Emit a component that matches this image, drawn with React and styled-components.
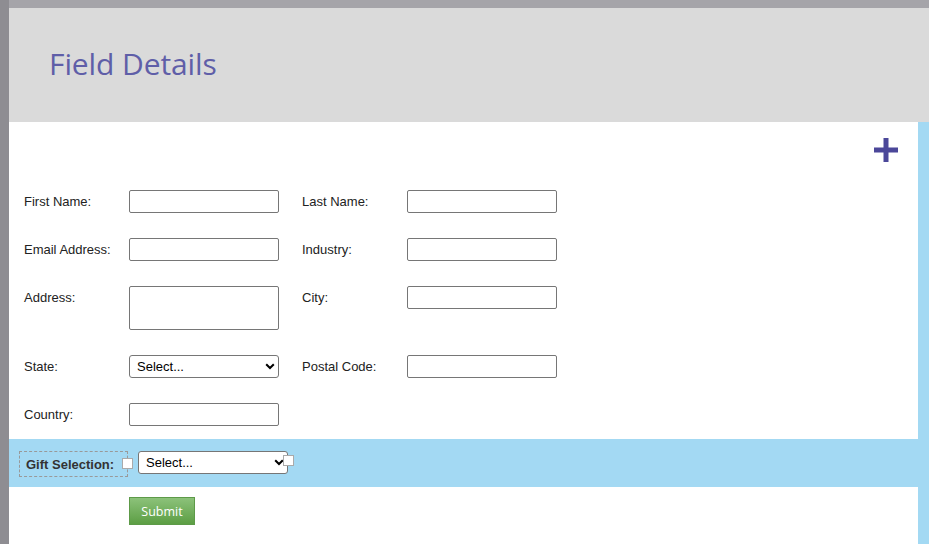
import React from "react"
import styled, { createGlobalStyle } from "styled-components"

const Global = createGlobalStyle`
  html, body { margin: 0; padding: 0; }
  body { background: #fff; font-family: "Liberation Sans", Arial, sans-serif; }
`

const Page = styled.div`
  width: 929px;
  height: 544px;
  display: flex;
  background: #8e8d92;
  overflow: hidden;
`

const Main = styled.div`
  margin-left: 9px;
  flex: 1;
  display: flex;
  flex-direction: column;
  border-top: 8px solid #a5a4a9;
`

const Header = styled.header`
  height: 114px;
  background: #dadada;
  display: flex;
  align-items: center;
  padding-left: 40px;
`

const Title = styled.h1`
  margin: 0 0 3px;
  font-family: "Open Sans", sans-serif;
  font-weight: 400;
  font-size: 30px;
  color: #5f5ea8;
  letter-spacing: -0.1px;
`

const Body = styled.div`
  flex: 1;
  background: #fff;
  border-right: 11px solid #a3d9f3;
  display: flex;
  flex-direction: column;
`

const Toolbar = styled.div`
  height: 68px;
  display: flex;
  justify-content: flex-end;
  align-items: flex-start;
  padding: 16px 20px 0 0;
  box-sizing: border-box;
`

const AddButton = styled.button`
  border: 0;
  background: none;
  padding: 0;
  width: 24px;
  height: 24px;
  cursor: pointer;
  display: block;
`

const Form = styled.div`
  display: grid;
  grid-template-columns: 105px 150px 23px 105px 150px;
  row-gap: 25px;
  padding-left: 15px;
`

const Label = styled.label`
  box-sizing: border-box;
  height: 23px;
  font-size: 13px;
  line-height: 22px;
  padding-top: 1px;
  color: #222;
  grid-column: ${p => p.col};
`

const TextInput = styled.input`
  box-sizing: border-box;
  width: 150px;
  height: 23px;
  border: 1px solid #767676;
  border-radius: 2px;
  background: #fff;
  margin: 0;
  grid-column: ${p => p.col};
`

const TextArea = styled.textarea`
  box-sizing: border-box;
  display: block;
  width: 150px;
  height: 44px;
  border: 1px solid #767676;
  border-radius: 2px;
  margin: 0;
  resize: none;
  grid-column: ${p => p.col};
`

const SelectWrap = styled.div`
  position: relative;
  width: 150px;
  height: 23px;
  grid-column: ${p => p.col};
`

const SelectBox = styled.select`
  appearance: none;
  box-sizing: border-box;
  display: block;
  width: 100%;
  height: 100%;
  margin: 0;
  padding: 0 20px 0 7px;
  border: 1px solid #767676;
  border-radius: 3px;
  background: #fff;
  font-family: "Liberation Sans", Arial, sans-serif;
  font-size: 13px;
  color: #000;
`

const Chevron = styled.svg`
  position: absolute;
  right: 4px;
  top: 8px;
  pointer-events: none;
`

const GiftBand = styled.div`
  margin: 13px -11px 0 0;
  height: 48px;
  background: #a3d9f3;
  display: flex;
  align-items: flex-start;
  padding: 12px 0 0 10px;
  box-sizing: border-box;
  gap: 10px;
`

const GiftLabel = styled.div`
  position: relative;
  box-sizing: border-box;
  width: 109px;
  height: 26px;
  border: 1px dashed #999;
  padding-left: 6px;
  display: flex;
  align-items: center;
  font-size: 13px;
  font-weight: 700;
  color: #333;
`

const Handle = styled.span`
  position: absolute;
  width: 9px;
  height: 9px;
  background: #fff;
  border: 1px solid #aaa;
  right: ${p => p.right}px;
  top: ${p => p.top}px;
`

const Actions = styled.div`
  padding: 10px 0 0 120px;
`

const Submit = styled.button`
  width: 66px;
  height: 28px;
  border: 1px solid #5d9a48;
  background: linear-gradient(#8cc27a, #5c9e44);
  color: #fff;
  font-family: "Open Sans", sans-serif;
  font-size: 12.5px;
  padding: 0;
  cursor: pointer;
`

const Select = ({ col, children }) => (
  <SelectWrap col={col}>
    <SelectBox defaultValue="">
      <option value="">Select...</option>
    </SelectBox>
    <Chevron width="10" height="7" viewBox="0 0 10 7">
      <path d="M1.2 1.2 L5 5 L8.8 1.2" fill="none" stroke="#000" strokeWidth="2" />
    </Chevron>
    {children}
  </SelectWrap>
)

const App = () => (
  <Page>
    <Global />
    <Main>
      <Header>
        <Title>Field Details</Title>
      </Header>
      <Body>
        <Toolbar>
          <AddButton aria-label="Add field">
            <svg width="24" height="24" viewBox="0 0 24 24">
              <path d="M9.5 0h5v9.5H24v5h-9.5V24h-5v-9.5H0v-5h9.5z" fill="#4b4799" />
            </svg>
          </AddButton>
        </Toolbar>
        <Form>
          <Label col={1}>First Name:</Label>
          <TextInput col={2} />
          <Label col={4}>Last Name:</Label>
          <TextInput col={5} />

          <Label col={1}>Email Address:</Label>
          <TextInput col={2} />
          <Label col={4}>Industry:</Label>
          <TextInput col={5} />

          <Label col={1}>Address:</Label>
          <TextArea col={2} />
          <Label col={4}>City:</Label>
          <TextInput col={5} />

          <Label col={1}>State:</Label>
          <Select col={2} />
          <Label col={4}>Postal Code:</Label>
          <TextInput col={5} />

          <Label col={1}>Country:</Label>
          <TextInput col={2} />
        </Form>
        <GiftBand>
          <GiftLabel>
            Gift Selection:
            <Handle right={-6} top={6} />
          </GiftLabel>
          <Select>
            <Handle right={-6} top={4} />
          </Select>
        </GiftBand>
        <Actions>
          <Submit>Submit</Submit>
        </Actions>
      </Body>
    </Main>
  </Page>
)

export default App
